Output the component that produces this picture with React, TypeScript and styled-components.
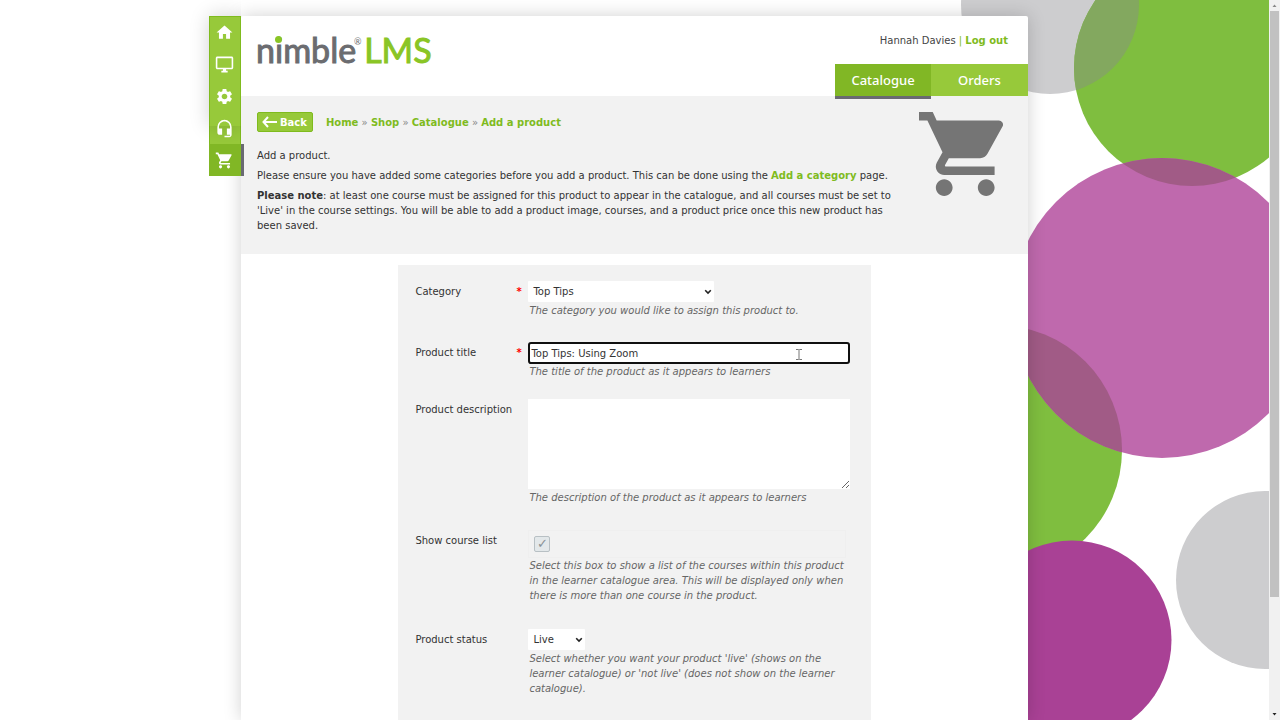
import React from "react";
import styled, { createGlobalStyle } from "styled-components";
import { MdHome, MdSettings, MdHeadsetMic, MdShoppingCart, MdOutlineDesktopWindows } from "react-icons/md";

const green = "#97c93a";
const activeGreen = "#81b725";
const linkGreen = "#7fbb1e";

const GlobalStyle = createGlobalStyle`
  * { box-sizing: border-box; }
  html, body { margin: 0; background: #fff; }
  body, button, input, select, textarea {
    font-family: Verdana, "DejaVu Sans", sans-serif;
    font-size: 10px;
    line-height: 15px;
    color: #333;
  }
  a { color: ${linkGreen}; font-weight: bold; text-decoration: none; }
  p { margin: 0; }
`;

const Screen = styled.div`
  position: relative;
  display: flex;
  height: 100vh;
  overflow: hidden;
`;

const Backdrop = styled.svg`
  position: absolute;
  top: 0;
  right: 11px;
`;

const Viewport = styled.div`
  position: relative;
  flex: 1;
  min-width: 0;
  display: grid;
  grid-template-columns: minmax(32px, 1fr) minmax(0, 787px) minmax(0, 1fr);
  padding-top: 16px;
`;

const SideNav = styled.nav`
  position: relative;
  z-index: 1;
  justify-self: end;
  align-self: start;
  display: flex;
  flex-direction: column;
  width: 32px;
  background: ${green};
  box-shadow: inset 1px 1px 0 ${linkGreen}, inset -1px 0 0 ${linkGreen};

  &::before {
    content: "";
    position: absolute;
    inset: 0 0 50px;
    z-index: -1;
    box-shadow: 0 0 20px rgba(0, 0, 0, 0.18);
    clip-path: inset(-30px 0 -30px -30px);
  }
`;

const SideLink = styled.a<{ $active?: boolean }>`
  display: flex;
  align-items: center;
  justify-content: center;
  height: 32px;
  padding-right: 1px;
  color: #fff;
  background: ${(p) => (p.$active ? activeGreen : "transparent")};
  box-shadow: ${(p) => (p.$active ? "3px 0 0 #6a6a72" : "none")};
`;

const Page = styled.div`
  background: #fff;
  border-radius: 2px 2px 0 0;
  box-shadow: 0 0 18px rgba(0, 0, 0, 0.18);
`;

const Header = styled.header`
  display: flex;
  justify-content: space-between;
  height: 80px;
`;

const Logo = styled.a`
  position: relative;
  display: flex;
  gap: 8px;
  padding: 13px 0 0 15px;
  font-family: Lato, sans-serif;
  font-size: 34px;
  font-weight: 400;
  line-height: 41px;
  color: #6b6c70;
  -webkit-text-stroke: 1px currentColor;
`;

const LogoAccent = styled.span`
  color: #8ac525;
`;

const LogoDot = styled.span`
  position: absolute;
  left: 34px;
  top: 20px;
  width: 7px;
  height: 7px;
  border-radius: 50%;
  background: #8ac525;
`;

const Registered = styled.span`
  position: absolute;
  left: 113px;
  top: 21px;
  font-size: 9px;
  font-weight: 400;
  line-height: 9px;
  -webkit-text-stroke: 0;
`;

const HeaderSide = styled.div`
  display: flex;
  flex-direction: column;
  justify-content: space-between;
  align-items: flex-end;
`;

const Account = styled.div`
  padding: 17px 20px 0 0;
  color: ${linkGreen};
`;

const UserName = styled.span`
  color: #444;
`;

const Tabs = styled.nav`
  display: flex;
`;

const Tab = styled.a<{ $active?: boolean }>`
  width: ${(p) => (p.$active ? 96 : 97)}px;
  height: 32px;
  font-family: "Noto Sans", "Open Sans", sans-serif;
  font-size: 13px;
  font-weight: 500;
  line-height: 32px;
  text-align: center;
  color: #fff;
  background: ${(p) => (p.$active ? activeGreen : green)};
  box-shadow: ${(p) => (p.$active ? "0 3px 0 #6a6a72" : "none")};
`;

const Intro = styled.section`
  display: flex;
  justify-content: space-between;
  height: 158px;
  padding: 16px 25px 0 16px;
  background: #f2f2f2;
`;

const IntroText = styled.div`
  display: flex;
  flex-direction: column;
  gap: 5px;
  width: 644px;
`;

const Trail = styled.div`
  display: flex;
  align-items: center;
  gap: 13px;
  margin-bottom: 11px;
  color: #888;
`;

const BackButton = styled.button`
  display: flex;
  align-items: center;
  gap: 3px;
  height: 20px;
  padding: 0 5px 0 4px;
  border: 1px solid ${linkGreen};
  border-radius: 2px;
  background: ${green};
  color: #fff;
  font-weight: bold;
`;

const Form = styled.form`
  width: 60%;
  min-height: 455px;
  margin: 11px auto 0;
  padding: 16px 21px 0 17px;
  background: #f2f2f2;
`;

const Row = styled.div<{ $gap: number }>`
  display: grid;
  grid-template-columns: 101px 12px minmax(0, 1fr);
  margin-bottom: ${(p) => p.$gap}px;
`;

const Label = styled.label`
  padding-top: 3px;
  white-space: nowrap;
`;

const Required = styled.span`
  padding-top: 3px;
  color: #f00;
  font-weight: bold;
`;

const Hint = styled.p`
  padding-left: 1px;
  font-style: italic;
  color: #666;
`;

const SelectWrap = styled.div<{ $width: number }>`
  position: relative;
  width: ${(p) => p.$width}px;
  margin-bottom: 1px;
`;

const Select = styled.select`
  display: block;
  width: 100%;
  height: 21px;
  padding: 0 5px;
  border: 0;
  border-radius: 1px;
  appearance: none;
  background: #fff;
`;

const Chevron = styled.svg`
  position: absolute;
  right: 2px;
  top: 8px;
  pointer-events: none;
`;

const TitleBox = styled.div`
  position: relative;
`;

const TextInput = styled.input`
  display: block;
  width: 100%;
  height: 22px;
  padding: 0 1px;
  border: 2px solid #101010;
  border-radius: 3px;
  background: #fff;
  outline: none;
`;

const TextCursor = styled.svg`
  position: absolute;
  right: 47px;
  top: 7px;
`;

const TextArea = styled.textarea`
  display: block;
  width: 100%;
  height: 90px;
  margin-bottom: 1px;
  border: 0;
  background: #fff;
`;

const CheckFrame = styled.div`
  margin: 0 4px 0 0;
  height: 28px;
  padding: 5px;
  border: 1px solid #efefef;
`;

const Checkbox = styled.input`
  display: grid;
  place-content: center;
  width: 16px;
  height: 16px;
  margin: 0;
  appearance: none;
  border: 1px solid #b8c0c4;
  border-radius: 2px;
  background: #e3e8ea;

  &:checked::before {
    content: "✓";
    font-size: 13px;
    font-weight: bold;
    line-height: 14px;
    color: #899196;
  }
`;

const ScrollTrack = styled.div`
  position: relative;
  display: flex;
  flex-direction: column;
  align-items: center;
  width: 11px;
  background: #f1f1f1;
`;

const ScrollThumb = styled.div`
  width: 9px;
  height: 586px;
  background: #c1c1c1;
`;

const ScrollArrow = styled.svg`
  flex: none;
`;

const Spacer = styled.div`
  flex: 1;
`;

function Circles() {
  return (
    <Backdrop width="308" height="720" viewBox="961 0 308 720" aria-hidden="true">
      <defs>
        <clipPath id="topGreen"><circle cx="1192" cy="68" r="118" /></clipPath>
        <clipPath id="bigPurple"><circle cx="1162" cy="308" r="150" /></clipPath>
      </defs>
      <circle cx="1050" cy="5" r="89" fill="#cdcdcf" />
      <circle cx="1192" cy="68" r="118" fill="#7fbe3f" />
      <circle cx="1050" cy="5" r="89" fill="#83a85f" clipPath="url(#topGreen)" />
      <circle cx="997" cy="450" r="125" fill="#7fbe3f" />
      <circle cx="1162" cy="308" r="150" fill="#bf69ad" />
      <g clipPath="url(#bigPurple)" fill="#a15b86">
        <circle cx="1192" cy="68" r="118" />
        <circle cx="997" cy="450" r="125" />
      </g>
      <circle cx="1072" cy="640" r="99.5" fill="#a94195" />
      <circle cx="1265" cy="580" r="89" fill="#cdcdcf" />
    </Backdrop>
  );
}

function DropDown({ id, width, options }: { id: string; width: number; options: string[] }) {
  return (
    <SelectWrap $width={width}>
      <Select id={id} defaultValue={options[0]}>
        {options.map((o) => <option key={o}>{o}</option>)}
      </Select>
      <Chevron width="8" height="6" viewBox="0 0 8 6" fill="none" stroke="#222" strokeWidth="1.6">
        <path d="M1.2 1.2 4 4l2.8-2.8" />
      </Chevron>
    </SelectWrap>
  );
}

export default function App() {
  return (
    <>
      <GlobalStyle />
      <Screen>
        <Circles />
        <Viewport>
          <SideNav aria-label="Main">
            <SideLink href="#home" aria-label="Home"><MdHome size={19} /></SideLink>
            <SideLink href="#desktop" aria-label="Desktop"><MdOutlineDesktopWindows size={19} /></SideLink>
            <SideLink href="#settings" aria-label="Settings"><MdSettings size={19} /></SideLink>
            <SideLink href="#support" aria-label="Support"><MdHeadsetMic size={19} /></SideLink>
            <SideLink href="#shop" aria-label="Shop" $active><MdShoppingCart size={19} /></SideLink>
          </SideNav>
          <Page>
            <Header>
              <Logo href="#home">
                <span>nimble</span>
                <LogoAccent>LMS</LogoAccent>
                <LogoDot />
                <Registered>®</Registered>
              </Logo>
              <HeaderSide>
                <Account><UserName>Hannah Davies</UserName> | <a href="#logout">Log out</a></Account>
                <Tabs>
                  <Tab href="#catalogue" $active>Catalogue</Tab>
                  <Tab href="#orders">Orders</Tab>
                </Tabs>
              </HeaderSide>
            </Header>
            <Intro>
              <IntroText>
                <Trail>
                  <BackButton type="button">
                    <svg width="15" height="12" viewBox="0 0 15 12" fill="none" stroke="#fff" strokeWidth="2">
                      <path d="M15 6H1.500M6 1 1.500 6 6 11" />
                    </svg>
                    Back
                  </BackButton>
                  <span>
                    <a href="#home">Home</a> » <a href="#shop">Shop</a> » <a href="#catalogue">Catalogue</a> » <a href="#add">Add a product</a>
                  </span>
                </Trail>
                <p>Add a product.</p>
                <p>Please ensure you have added some categories before you add a product. This can be done using the <a href="#category">Add a category</a> page.</p>
                <p><strong>Please note</strong>: at least one course must be assigned for this product to appear in the catalogue, and all courses must be set to 'Live' in the course settings. You will be able to add a product image, courses, and a product price once this new product has been saved.</p>
              </IntroText>
              <svg width="84" height="84" viewBox="1 2 20 20" fill="#757575" aria-hidden="true">
                <path d="M7 18c-1.100 0-1.990.9-1.990 2S5.900 22 7 22s2-.9 2-2-.9-2-2-2zM1 2v2h2l3.600 7.590-1.350 2.450c-.16.28-.25.61-.25.96 0 1.100.9 2 2 2h12v-2H7.420c-.14 0-.25-.11-.25-.25l.03-.12.9-1.630h7.450c.75 0 1.410-.41 1.750-1.030l3.580-6.490A1.003 1.003 0 0 0 20 4H5.210l-.94-2H1zm16 16c-1.100 0-1.990.9-1.990 2s.89 2 1.990 2 2-.9 2-2-.9-2-2-2z" />
              </svg>
            </Intro>
            <Form>
              <Row $gap={24}>
                <Label htmlFor="category">Category</Label>
                <Required>*</Required>
                <div>
                  <DropDown id="category" width={186} options={["Top Tips"]} />
                  <Hint>The category you would like to assign this product to.</Hint>
                </div>
              </Row>
              <Row $gap={20}>
                <Label htmlFor="title">Product title</Label>
                <Required>*</Required>
                <TitleBox>
                  <TextInput id="title" defaultValue="Top Tips: Using Zoom" />
                  <TextCursor width="8" height="11" viewBox="0 0 8 11" fill="none" stroke="#777">
                    <path d="M1 .5h2.500L4 1l.5-.5H7M4 1v9M1 10.500h2.500L4 10l.5.5H7" />
                  </TextCursor>
                  <Hint>The title of the product as it appears to learners</Hint>
                </TitleBox>
              </Row>
              <Row $gap={25}>
                <Label htmlFor="description">Product description</Label>
                <span />
                <div>
                  <TextArea id="description" />
                  <Hint>The description of the product as it appears to learners</Hint>
                </div>
              </Row>
              <Row $gap={26}>
                <Label htmlFor="courses">Show course list</Label>
                <span />
                <div>
                  <CheckFrame><Checkbox id="courses" type="checkbox" defaultChecked /></CheckFrame>
                  <Hint>Select this box to show a list of the courses within this product in the learner catalogue area. This will be displayed only when there is more than one course in the product.</Hint>
                </div>
              </Row>
              <Row $gap={25}>
                <Label htmlFor="status">Product status</Label>
                <span />
                <div>
                  <DropDown id="status" width={57} options={["Live", "Not live"]} />
                  <Hint>Select whether you want your product 'live' (shows on the learner catalogue) or 'not live' (does not show on the learner catalogue).</Hint>
                </div>
              </Row>
            </Form>
          </Page>
        </Viewport>
        <ScrollTrack aria-hidden="true">
          <ScrollArrow width="11" height="11" viewBox="0 0 11 11"><path d="M3.500 7h4L5.500 4.500z" fill="#888" /></ScrollArrow>
          <ScrollThumb />
          <Spacer />
          <ScrollArrow width="11" height="12" viewBox="0 0 11 12"><path d="M3.500 5h4L5.500 7.500z" fill="#222" /></ScrollArrow>
        </ScrollTrack>
      </Screen>
    </>
  );
}
